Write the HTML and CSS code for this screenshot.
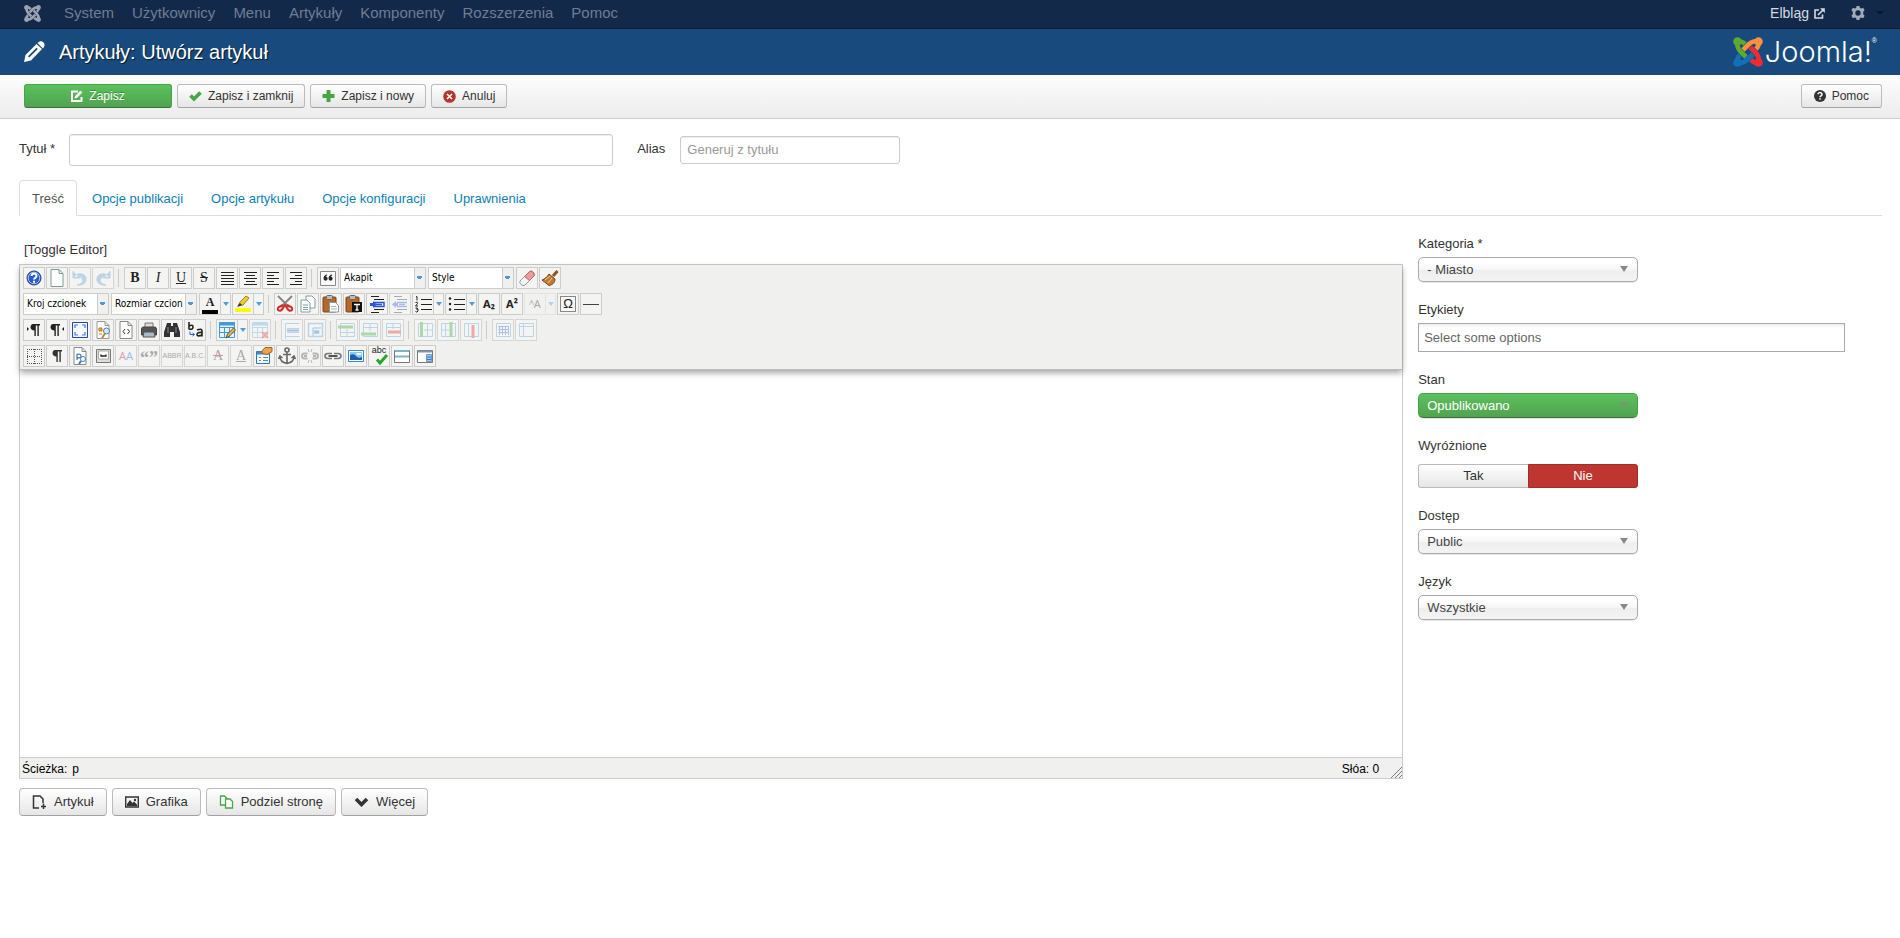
FILE: index.html
```html
<!DOCTYPE html>
<html lang="pl">
<head>
<meta charset="utf-8">
<title>Artykuły: Utwórz artykuł</title>
<link rel="stylesheet" href="styles.css">
</head>
<body>
<svg width="0" height="0" class="defs" aria-hidden="true">
  <defs>
    <g id="arm" fill="none" stroke-width="4.600">
      <circle cx="4.500" cy="4.500" r="2" />
      <path d="M4 5C4 10 5 12 7.500 14.500L13 20M5 4C9 4 10.500 5.500 12 7" />
    </g>
    <path id="page" d="M4 1.500h8l4 4v13H4zM12 1.500v4h4" />
    <g id="pilcrow"><path d="M9 4h7v1.500h-1.200V16h-1.400V5.500h-1.600V16h-1.400v-5.500C8 10.500 6.500 9 6.500 7.200S7.500 4 9 4z" /></g>
    <g id="cells" fill="none"><path d="M2.500 2.500h15v15h-15zM2.500 7.500h15M2.500 12.500h15M7.500 7.500v10M12.500 7.500v10" /><path d="M2.500 4h15" stroke-width="3" /></g>
    <g id="clip"><rect x="2" y="3" width="13" height="15" rx="1" fill="#b8672a" stroke="#7e4317" /><rect x="5.500" y="1.500" width="6" height="4" rx="1" fill="#bbb" stroke="#666" /></g>
  </defs>
</svg>

<nav class="topbar">
  <a class="brand" href="#" aria-label="Joomla">
    <svg width="17" height="17" viewBox="0 0 30 30" stroke="#9aa3b0">
      <use href="#arm" /><use href="#arm" transform="rotate(90 15 15)" /><use href="#arm" transform="rotate(180 15 15)" /><use href="#arm" transform="rotate(270 15 15)" />
    </svg>
  </a>
  <ul class="menu">
    <li><a href="#">System</a></li>
    <li><a href="#">Użytkownicy</a></li>
    <li><a href="#">Menu</a></li>
    <li><a href="#">Artykuły</a></li>
    <li><a href="#">Komponenty</a></li>
    <li><a href="#">Rozszerzenia</a></li>
    <li><a href="#">Pomoc</a></li>
  </ul>
  <a class="site" href="#">Elbląg
    <svg width="11" height="11" viewBox="0 0 11 11" fill="none" stroke="#d6dbe2" stroke-width="1.600"><path d="M5 2H1v8h7.500V6.500M4 7l5-5" /><path d="M6 .2h4.800V5z" fill="#d6dbe2" stroke="none" /></svg>
  </a>
  <button class="gear" type="button" aria-label="Ustawienia">
    <svg width="14" height="14" viewBox="0 0 14 14"><path fill="#a3abb8" fill-rule="evenodd" d="M5.600 0h2.800l.5 1.900 1.400.7 1.800-.8 1.500 2.400-1.400 1.500v2.600l1.400 1.500-1.500 2.400-1.800-.8-1.400.7-.5 1.900H5.600l-.5-1.900-1.400-.7-1.800.8L.400 9.800l1.400-1.500V5.700L.4 4.200l1.500-2.400 1.800.8 1.400-.7zM7 4.300a2.700 2.700 0 1 0 0 5.400 2.700 2.700 0 0 0 0-5.400z" /></svg>
    <span class="caret"></span>
  </button>
</nav>

<header class="header">
  <svg width="22" height="22" viewBox="0 0 22 22"><path fill="#fff" fill-rule="evenodd" d="M1 21l1.500-7L13.500 3l5.500 5L8 19.500zM13.500 6.800L5 15.200l1.200 1.300 8.600-8.400zM14.500 2C17-.5 19 0 20.500 1.500S22 5 20 7.500z" /></svg>
  <h1>Artykuły: Utwórz artykuł</h1>
  <div class="logo">
    <svg width="30" height="30" viewBox="0 0 30 30">
      <use href="#arm" stroke="#5cab2e" /><use href="#arm" transform="rotate(90 15 15)" stroke="#f9913d" /><use href="#arm" transform="rotate(180 15 15)" stroke="#ee2c32" /><use href="#arm" transform="rotate(270 15 15)" stroke="#1170b8" />
    </svg>
    <span>Joomla!</span><sup>®</sup>
  </div>
</header>

<div class="subhead">
  <button class="btn btn-success" type="button">
    <svg width="12" height="12" viewBox="0 0 12 12" fill="none" stroke="#fff" stroke-width="2"><path d="M7 1.500H1v9.500h9.500V7" /><path d="M3.500 8.500l.6-2.500L9.500.6l1.900 1.900L6 8z" fill="#fff" stroke="none" /></svg>
    Zapisz</button>
  <button class="btn" type="button">
    <svg width="13" height="12" viewBox="0 0 13 12"><path d="M1.500 5.500l3.500 3.500L11.500 2.500" fill="none" stroke="#46a546" stroke-width="3.600" /></svg>
    Zapisz i zamknij</button>
  <button class="btn" type="button">
    <svg width="13" height="12" viewBox="0 0 13 12"><path d="M6.500 0v12M.5 6h12" stroke="#46a546" stroke-width="4" /></svg>
    Zapisz i nowy</button>
  <button class="btn" type="button">
    <svg width="13" height="13" viewBox="0 0 13 13"><circle cx="6.500" cy="6.500" r="6.300" fill="#b5352e" /><path d="M4 4l5 5M9 4L4 9" stroke="#fff" stroke-width="1.600" /></svg>
    Anuluj</button>
  <button class="btn help" type="button">
    <svg width="12" height="12" viewBox="0 0 12 12"><circle cx="6" cy="6" r="6" fill="#333" /><path d="M4 4.300C4 2 8.200 2 8 4.500 8 5.800 6 5.800 6 7.200M6 8.200v1.600" fill="none" stroke="#fff" stroke-width="1.500" /></svg>
    Pomoc</button>
</div>

<main>
  <div class="title-row">
    <label for="title">Tytuł *</label>
    <input class="title-input" id="title" type="text">
    <label class="alias-label" for="alias">Alias</label>
    <input class="alias-input" id="alias" type="text" placeholder="Generuj z tytułu">
  </div>

  <ul class="tabs">
    <li><a class="active" href="#">Treść</a></li>
    <li><a href="#">Opcje publikacji</a></li>
    <li><a href="#">Opcje artykułu</a></li>
    <li><a href="#">Opcje konfiguracji</a></li>
    <li><a href="#">Uprawnienia</a></li>
  </ul>

  <div class="columns">
    <section class="content">
      <a class="toggle" href="#">[Toggle Editor]</a>
      <div class="editor">
        <div class="tools">
          <div class="row">
            <button class="t" type="button" aria-label="Pomoc edytora"><svg viewBox="0 0 20 20"><circle cx="10" cy="10" r="7" fill="#2a5bc8" stroke="#1d3f96" /><circle cx="10" cy="10" r="5.800" fill="none" stroke="#a9c2f2" /><path d="M7.500 8C7.500 5 12.500 5 12.500 8c0 1.800-2.500 1.800-2.500 3.500M10 12.800v2" fill="none" stroke="#fff" stroke-width="2" /></svg></button>
            <button class="t" type="button" aria-label="Nowy dokument"><svg viewBox="0 0 20 20"><use href="#page" fill="#fff" stroke="#7c9a92" /></svg></button>
            <button class="t off" type="button" aria-label="Cofnij"><svg viewBox="0 0 20 20"><path d="M3 3v7h7M4 9c3-5 11-4 12 1s-4 8-9 7c5-1 7-4 5-6.500S7 8 6 10z" fill="#5b9bd0" stroke="#5b9bd0" /></svg></button>
            <button class="t off" type="button" aria-label="Ponów"><svg viewBox="0 0 20 20"><path d="M17 3v7h-7M16 9C13 4 5 5 4 10s4 8 9 7c-5-1-7-4-5-6.500S13 8 14 10z" fill="#5b9bd0" stroke="#5b9bd0" /></svg></button>
            <i class="sep"></i>
            <button class="t glyph" type="button"><b>B</b></button>
            <button class="t glyph" type="button"><em>I</em></button>
            <button class="t glyph" type="button"><u>U</u></button>
            <button class="t glyph" type="button"><s>S</s></button>
            <button class="t" type="button" aria-label="Wyjustuj"><svg viewBox="0 0 20 20" stroke="#222"><path d="M4 4.500h13M4 7.500h13M4 10.500h13M4 13.500h13M4 16.500h13" /></svg></button>
            <button class="t" type="button" aria-label="Wyśrodkuj"><svg viewBox="0 0 20 20" stroke="#222"><path d="M4 4.500h13M6 7.500h9M4 10.500h13M6 13.500h9M4 16.500h13" /></svg></button>
            <button class="t" type="button" aria-label="Do lewej"><svg viewBox="0 0 20 20" stroke="#222"><path d="M4 4.500h12M4 7.500h7M4 10.500h12M4 13.500h7M4 16.500h12" /></svg></button>
            <button class="t" type="button" aria-label="Do prawej"><svg viewBox="0 0 20 20" stroke="#222"><path d="M4 4.500h12M9 7.500h7M4 10.500h12M9 13.500h7M4 16.500h12" /></svg></button>
            <i class="sep"></i>
            <button class="t" type="button" aria-label="Cytat blokowy"><svg viewBox="0 0 20 20"><path d="M2.500 3.500h15v14h-15z" fill="#fafafa" stroke="#888" /><path d="M9 7c-2 0-3 1.500-3 3.500A1.600 1.600 0 1 0 7.500 9M14 7c-2 0-3 1.500-3 3.500A1.600 1.600 0 1 0 12.500 9" fill="#222" stroke="#222" /></svg></button>
            <div class="pick"><select aria-label="Format"><option>Akapit</option></select></div>
            <div class="pick"><select aria-label="Style"><option>Style</option></select></div>
            <button class="t" type="button" aria-label="Usuń formatowanie"><svg viewBox="0 0 20 20"><path d="M3 13l9-9q2-2 4 0t1 4l-9 9q-2 1.500-4-.5T3 13z" fill="#f5f5f5" stroke="#999" /><path d="M7.500 8.500L12 4q2-2 4 0t1 4l-4.500 4.500z" fill="#eb9c9c" stroke="#b96a6a" /></svg></button>
            <button class="t" type="button" aria-label="Wyczyść kod"><svg viewBox="0 0 20 20"><path d="M17.500 3L13 8" stroke="#8a5423" stroke-width="3" /><path d="M9 6l6 5c0 4-3 6-6 6.500L2 12c3-1 5-3 7-6z" fill="#c17a35" stroke="#744317" /><path d="M5 12l5-4M8 15l4-5" stroke="#f0c890" /></svg></button>
          </div>
          <div class="row">
            <div class="pick"><select aria-label="Kroj czcionek"><option>Kroj czcionek</option></select></div>
            <div class="pick"><select aria-label="Rozmiar czcionek"><option>Rozmiar czcion</option></select></div>
            <div class="split"><button class="t color-a" type="button">A</button><button class="dd" type="button" aria-label="Kolor tekstu"></button></div>
            <div class="split"><button class="t" type="button" aria-label="Podświetl"><svg viewBox="0 0 20 20"><path d="M2 14h16v4H2z" fill="#ff0" /><path d="M5 12l2-4 6-6 3 2-6 7z" fill="#f0d028" stroke="#9b8420" /><path d="M4 13l3-4 2 2z" fill="#333" /></svg></button><button class="dd" type="button" aria-label="Kolor tła"></button></div>
            <i class="sep"></i>
            <button class="t" type="button" aria-label="Wytnij"><svg viewBox="0 0 20 20" fill="none"><path d="M3 2l11 11M17 2L6 13" stroke="#888" stroke-width="2" /><path d="M8 11l-3 1.500q-3 1-2 3.500 3 2 5-2l2-3 2 3q2 4 5 2 1-2.500-2-3.500L12 11" stroke="#cf2b2b" stroke-width="2" /></svg></button>
            <button class="t" type="button" aria-label="Kopiuj"><svg viewBox="0 0 20 20" fill="#fff" stroke="#7f9ea5"><path d="M8 2h6l3 3v9H8z" /><path d="M3 6h6l3 3v9H3zM5 11h5M5 13.500h5M5 15.500h5" /></svg></button>
            <button class="t" type="button" aria-label="Wklej"><svg viewBox="0 0 20 20"><use href="#clip" /><path d="M8.500 8.500h6l3 3v6.500h-9z" fill="#fff" stroke="#7f9ea5" /><path d="M10 12.500h5M10 15h6" stroke="#9bb" /></svg></button>
            <button class="t" type="button" aria-label="Wklej jako tekst"><svg viewBox="0 0 20 20"><use href="#clip" /><path d="M8 8h10v10H8z" fill="#111" /><path d="M10 10.500h6M13 10.500V16M11.500 16h3" stroke="#fff" stroke-width="1.300" /></svg></button>
            <button class="t" type="button" aria-label="Zwiększ wcięcie"><svg viewBox="0 0 20 20"><path d="M4 2.500h8M7 5.500h10M7 15.500h10M4 18.500h8" stroke="#222" /><path d="M7 8.500h10v4H7M9 10.500h6" fill="none" stroke="#2a57d8" stroke-width="1.500" /><path d="M3 9h3V7l4 3.500L6 14v-2H3z" fill="#2a57d8" /></svg></button>
            <button class="t off" type="button" aria-label="Zmniejsz wcięcie"><svg viewBox="0 0 20 20"><path d="M4 2.500h8M7 5.500h10M7 15.500h10M4 18.500h8" stroke="#222" /><path d="M7 8.500h10M7 12.500h10M9 10.500h6" stroke="#2a57d8" stroke-width="1.500" /><path d="M8 9v3H6v2l-4-3.500L6 7v2z" fill="#2a57d8" /></svg></button>
            <div class="split"><button class="t" type="button" aria-label="Numerowanie"><svg viewBox="0 0 20 20" fill="none" stroke="#222"><path d="M8 5.500h11M8 10.500h11M8 15.500h11M3 3l1-.5v4M2.500 8.500q2.500-1 2 1l-2 2.500H5M2.500 14q2.500-.5 2 1h-1q2.500 0 1.500 2t-2.500.5" /></svg></button><button class="dd" type="button" aria-label="Rodzaj numeracji"></button></div>
            <div class="split"><button class="t" type="button" aria-label="Wypunktowanie"><svg viewBox="0 0 20 20" fill="none" stroke="#222"><path d="M8 5.500h11M8 10.500h11M8 15.500h11" /><circle cx="4" cy="4.500" r="1.200" fill="#222" stroke="none" /><circle cx="4" cy="10" r="1.200" fill="#222" stroke="none" /><circle cx="4" cy="15.500" r="1.200" fill="#222" stroke="none" /></svg></button><button class="dd" type="button" aria-label="Rodzaj punktora"></button></div>
            <button class="t tiny" type="button"><b>A₂</b></button>
            <button class="t tiny" type="button"><b>A²</b></button>
            <div class="split off"><button class="t tiny" type="button">ᴬA</button><button class="dd" type="button" aria-label="Wielkość liter"></button></div>
            <button class="t omega" type="button"><span>Ω</span></button>
            <button class="t" type="button" aria-label="Linia pozioma"><svg viewBox="0 0 20 20"><path d="M2 10.500h16" stroke="#444" /></svg></button>
          </div>
          <div class="row">
            <button class="t" type="button" aria-label="Od lewej do prawej"><svg viewBox="0 0 20 20"><use href="#pilcrow" fill="#222" /><path d="M3 7v4l2-2z" fill="#222" /></svg></button>
            <button class="t" type="button" aria-label="Od prawej do lewej"><svg viewBox="0 0 20 20"><use href="#pilcrow" x="-3" fill="#222" /><path d="M17 7v4l-2-2z" fill="#222" /></svg></button>
            <button class="t" type="button" aria-label="Pełny ekran"><svg viewBox="0 0 20 20"><path d="M2.500 2.500h15v15h-15z" fill="#f4f8ff" stroke="#2449b8" /><path d="M5 8V5h3M12 5h3v3M5 12v3h3M12 15h3v-3" fill="none" stroke="#4a78e0" stroke-width="1.200" /></svg></button>
            <button class="t" type="button" aria-label="Podgląd"><svg viewBox="0 0 20 20"><use href="#page" fill="#fff" stroke="#999" /><path d="M6 8h3v3H6zM6 14h3" fill="#e8a53a" stroke="#c07f20" /><circle cx="13.500" cy="11" r="3" fill="#d5e9fa" stroke="#557fa8" /><path d="M12 13.500L9 18" stroke="#b88a30" stroke-width="2" /></svg></button>
            <button class="t" type="button" aria-label="Kod HTML"><svg viewBox="0 0 20 20"><use href="#page" fill="#fff" stroke="#888" /><path d="M9 9l-2 2.500L9 14M11.500 9l2 2.500-2 2.500" fill="none" stroke="#333" /></svg></button>
            <button class="t" type="button" aria-label="Drukuj"><svg viewBox="0 0 20 20"><path d="M6 3h8v5H6z" fill="#ddd" stroke="#777" /><path d="M2.500 9q0-2 2-2h11q2 0 2 2v6h-15z" fill="#555" stroke="#444" /><path d="M5 12h10l1 5H4z" fill="#abc" stroke="#555" /></svg></button>
            <button class="t" type="button" aria-label="Znajdź"><svg viewBox="0 0 20 20"><path d="M5 3h4v3h2V3h4l3 9v5h-6v-5H8v5H2v-5z" fill="#333" /><path d="M6 7v6M14 7v6" stroke="#888" /></svg></button>
            <button class="t" type="button" aria-label="Zamień"><svg viewBox="0 0 20 20" fill="none" stroke="#222" stroke-width="1.600"><path d="M4 2v7.500M4 6q4-2 4 1t-4 2M12 10q5-2 5 1v5.500M17 12.500q-5-.5-5 2t5 .5" /><path d="M5 11.500v3h4M7.500 13l2 1.500-2 1.500" stroke="#2a57d8" stroke-width="1" /></svg></button>
            <i class="sep"></i>
            <div class="split"><button class="t" type="button" aria-label="Tabela"><svg viewBox="0 0 20 20"><path d="M2.500 2.500h15v15h-15z" fill="#e8f4fc" /><use href="#cells" stroke="#459ad5" /><path d="M9 18l1.500-4 6-6 2 2-6 6z" fill="#d9b765" stroke="#6b542a" /></svg></button><button class="dd" type="button" aria-label="Menu tabeli"></button></div>
            <button class="t off" type="button" aria-label="Usuń tabelę"><svg viewBox="0 0 20 20"><use href="#cells" stroke="#5aa9dd" /><path d="M12 12l6 6M18 12l-6 6" stroke="#e02020" stroke-width="2" /></svg></button>
            <i class="sep"></i>
            <button class="t off" type="button" aria-label="Właściwości wiersza"><svg viewBox="0 0 20 20" fill="none" stroke="#4c9cdc"><path d="M17.500 3.500h-14v13h14M3.500 6v13M5 8.500h12M5 12.500h12" /><path d="M5 10.500h12" stroke="#235fc0" stroke-width="2" /></svg></button>
            <button class="t off" type="button" aria-label="Właściwości komórki"><svg viewBox="0 0 20 20" fill="none" stroke="#4c9cdc"><path d="M3.500 3.500h14v13h-14zM8 8h8M8 8v8" stroke-width="1.500" /><path d="M9 10.500h5v3H9z" fill="#235fc0" /></svg></button>
            <i class="sep"></i>
            <button class="t off" type="button" aria-label="Wiersz przed"><svg viewBox="0 0 20 20" fill="none"><path d="M3.500 3.500h14v13h-14zM3.500 12.500h14M10 9v8" stroke="#4c9cdc" /><path d="M1 7h15" stroke="#24a524" stroke-width="3" /></svg></button>
            <button class="t off" type="button" aria-label="Wiersz po"><svg viewBox="0 0 20 20" fill="none"><path d="M3.500 3.500h14v13h-14zM3.500 7.500h14M10 4v7" stroke="#4c9cdc" /><path d="M1 14h15" stroke="#24a524" stroke-width="3" /></svg></button>
            <button class="t off" type="button" aria-label="Usuń wiersz"><svg viewBox="0 0 20 20" fill="none"><path d="M3.500 3.500h14v13h-14zM3.500 7.500h14M10 4v5" stroke="#4c9cdc" /><path d="M5 12h13" stroke="#e02020" stroke-width="3" /></svg></button>
            <i class="sep"></i>
            <button class="t off" type="button" aria-label="Kolumna przed"><svg viewBox="0 0 20 20" fill="none"><path d="M3.500 3.500h14v13h-14zM12.500 4v13M9 10h8" stroke="#4c9cdc" /><path d="M6.500 2v15" stroke="#24a524" stroke-width="3" /></svg></button>
            <button class="t off" type="button" aria-label="Kolumna po"><svg viewBox="0 0 20 20" fill="none"><path d="M3.500 3.500h14v13h-14zM7.500 4v13M4 10h7" stroke="#4c9cdc" /><path d="M13 2v15" stroke="#24a524" stroke-width="3" /></svg></button>
            <button class="t off" type="button" aria-label="Usuń kolumnę"><svg viewBox="0 0 20 20" fill="none"><path d="M3.500 3.500h14v13h-14zM7.500 4v13" stroke="#4c9cdc" /><path d="M12 5v13" stroke="#e02020" stroke-width="3" /></svg></button>
            <i class="sep"></i>
            <button class="t off" type="button" aria-label="Podziel komórki"><svg viewBox="0 0 20 20" fill="none"><path d="M3.500 3.500h14v13h-14z" stroke="#4c9cdc" /><path d="M5.500 6.500h10M5.500 9.500h10M5.500 12.500h10M6.500 6v9M9.500 6v9M12.500 6v9M15.500 6v9" stroke="#235fc0" /></svg></button>
            <button class="t off" type="button" aria-label="Scal komórki"><svg viewBox="0 0 20 20" fill="none"><path d="M3.500 3.500h14v13h-14zM3.500 6.500h14M7.500 4v13" stroke="#4c9cdc" /></svg></button>
          </div>
          <div class="row">
            <button class="t" type="button" aria-label="Linie pomocnicze"><svg viewBox="0 0 20 20" fill="none" stroke="#555" stroke-dasharray="1 1"><path d="M3 3.500h14M3 10.500h14M3 17.500h14M3.500 3v15M10.500 3v15M17.500 3v15" /></svg></button>
            <button class="t" type="button" aria-label="Znaki sterujące"><svg viewBox="0 0 20 20"><use href="#pilcrow" x="-1" fill="#333" /></svg></button>
            <button class="t" type="button" aria-label="Szablon"><svg viewBox="0 0 20 20" fill="none"><use href="#page" fill="#fff" stroke="#888" /><path d="M7 8v6M7 8.500q4-1 4 1.500t-4 1.500" stroke="#4a7fb5" stroke-width="1.300" /><circle cx="13" cy="13" r="2.500" stroke="#4a7fb5" /><path d="M11 15l-2 3" stroke="#4a7fb5" stroke-width="2" /></svg></button>
            <button class="t" type="button" aria-label="Twarda spacja"><svg viewBox="0 0 20 20" fill="none"><path d="M3.500 3.500h14v13h-14z" fill="#ddd" stroke="#777" /><path d="M5.500 5h10v8h-10z" fill="#fff" stroke="#aaa" /><path d="M8 8.500V10h5V8.500" stroke="#222" stroke-width="1.300" /></svg></button>
            <button class="t tiny style off" type="button"><span>A</span>A</button>
            <button class="t quote off" type="button">“”</button>
            <button class="t micro off" type="button">ABBR</button>
            <button class="t micro off" type="button">A.B.C.</button>
            <button class="t glyph del off" type="button"><s>A</s></button>
            <button class="t glyph off" type="button"><u>A</u></button>
            <button class="t" type="button" aria-label="Atrybuty"><svg viewBox="0 0 20 20"><path d="M2.500 5.500h13v12h-13z" fill="#fff" stroke="#2d76bd" /><path d="M3 7h12" stroke="#3a8bd5" stroke-width="3" /><path d="M5 11.500h2M9 11.500h5M5 14.500h2M9 14.500h5" stroke="#4a8ccc" /><path d="M8 5l3-3.500h7v4l-3 2-2 1-5-1z" fill="#e9a457" stroke="#a35e1c" /></svg></button>
            <button class="t" type="button" aria-label="Kotwica"><svg viewBox="0 0 20 20" fill="none" stroke="#666" stroke-width="1.600"><circle cx="10" cy="4" r="2" /><path d="M10 6v12M6 8.500h8M3 10.500q0 5.500 7 7 7-1.500 7-7M1.500 13L3 10l2.500 2M18.500 13L17 10l-2.500 2" /></svg></button>
            <button class="t off" type="button" aria-label="Usuń odnośnik"><svg viewBox="0 0 20 20" fill="none" stroke="#444"><path d="M7.500 7.500h-3q-2.500 0-2.500 2.500t2.500 2.500h3M12.500 7.500h3q2.500 0 2.500 2.500t-2.500 2.500h-3M4 10h3M13 10h3" stroke-width="2" /><path d="M8 3l1 3M12 3l-1 3M8 17l1-3M12 17l-1-3" /></svg></button>
            <button class="t" type="button" aria-label="Odnośnik"><svg viewBox="0 0 20 20" fill="none"><path d="M9 7.500H5q-3 0-3 2.500t3 2.500h4M11 7.500h4q3 0 3 2.500t-3 2.500h-4" stroke="#777" stroke-width="1.600" /><path d="M5.500 10h9" stroke="#555" stroke-width="2" /></svg></button>
            <button class="t" type="button" aria-label="Grafika"><svg viewBox="0 0 20 20"><path d="M2.500 4.500h15v11h-15z" fill="#fff" stroke="#3c8acb" /><path d="M4 6h12v8H4z" fill="#8ec7ef" /><path d="M4 9q4-2 6 1t6 1v3H4z" fill="#1d5fa8" /><path d="M10 7h5v2h-4z" fill="#fff" /></svg></button>
            <button class="t spell" type="button"><span>abc</span><svg viewBox="0 0 20 20"><path d="M8 13.500l3 3.500 7-8" fill="none" stroke="#2aa52a" stroke-width="3" /></svg></button>
            <button class="t" type="button" aria-label="Warstwa"><svg viewBox="0 0 20 20"><path d="M2.500 4.500h15v12h-15z" fill="#fff" stroke="#777" /><path d="M3 5h14M3 10.500h14" stroke="#7fb2c4" stroke-width="2" /></svg></button>
            <button class="t" type="button" aria-label="Obiekt"><svg viewBox="0 0 20 20"><path d="M2.500 4.500h15v12h-15z" fill="#fff" stroke="#777" /><path d="M3 5.500h14" stroke="#7b98ae" stroke-width="2" /><path d="M11.500 8.500h5v7h-5z" fill="#9cc5ec" stroke="#6a9ccf" /><path d="M12 11h4M12 13.500h4" stroke="#3a76b5" /></svg></button>
          </div>
        </div>
        <textarea class="canvas" aria-label="Treść artykułu"></textarea>
        <div class="status">
          <span>Ścieżka:</span><span>p</span>
          <span class="words">Słóa: 0</span>
          <svg width="11" height="11" viewBox="0 0 11 11" stroke="#777"><path d="M0 11L11 0M4 11l7-7M8 11l3-3" /></svg>
        </div>
      </div>
      <div class="below">
        <button class="btn large" type="button"><svg width="15" height="14" viewBox="0 0 15 14" fill="none" stroke="#333" stroke-width="1.500"><path d="M7 13H1.500V1H8l3 3v4M11.500 8.500v5.500M9 11.500h5" /></svg>Artykuł</button>
        <button class="btn large" type="button"><svg width="14" height="12" viewBox="0 0 14 12"><path d="M.7 1h12.600v10H.7z" fill="none" stroke="#333" stroke-width="1.400" /><path d="M2 10V8l3-4 2.500 3L9 5.500l3 3V10z" fill="#333" /><circle cx="10" cy="4" r="1.200" fill="#333" /></svg>Grafika</button>
        <button class="btn large" type="button"><svg width="15" height="14" viewBox="0 0 14 14" fill="#fff" stroke="#46a546" stroke-width="1.300"><path d="M1 1h4l3 3v6H1z" /><path d="M6 4h4.500L13 6.500V13H6z" /></svg>Podziel stronę</button>
        <button class="btn large" type="button"><svg width="15" height="10" viewBox="0 0 14 10"><path d="M1.500 2L7 7.500 12.500 2" fill="none" stroke="#333" stroke-width="3.600" /></svg>Więcej</button>
      </div>
    </section>

    <aside class="side">
      <div class="field"><label for="cat">Kategoria *</label><div class="chosen"><select id="cat"><option>- Miasto</option></select></div></div>
      <div class="field"><label for="tags">Etykiety</label><input class="tags" id="tags" type="text" placeholder="Select some options"></div>
      <div class="field"><label for="state">Stan</label><div class="chosen green"><select id="state"><option>Opublikowano</option></select></div></div>
      <div class="field radios"><span id="feat">Wyróżnione</span><div class="toggle-group" role="group" aria-labelledby="feat"><button type="button">Tak</button><button class="no" type="button">Nie</button></div></div>
      <div class="field"><label for="access">Dostęp</label><div class="chosen"><select id="access"><option>Public</option></select></div></div>
      <div class="field"><label for="lang">Język</label><div class="chosen"><select id="lang"><option>Wszystkie</option></select></div></div>
    </aside>
  </div>
</main>
</body>
</html>
```

FILE: styles.css
```css
* { box-sizing: border-box; }
body { margin: 0; background: #fff; color: #333; font: 13px/18px "Liberation Sans", Arial, sans-serif; }
button, input, select, textarea { font: inherit; color: inherit; margin: 0; }
a { text-decoration: none; color: inherit; }
ul { list-style: none; margin: 0; padding: 0; }
svg { display: block; flex: none; }
.defs { position: absolute; }

.topbar { display: flex; align-items: center; height: 29px; padding: 0 16px 2px 24px; background: #13294a; border-bottom: 1px solid #0d1f3a; font-size: 15px; color: #6f7d92; }
.menu { display: flex; gap: 18px; margin-left: 23px; }
.site { display: flex; align-items: center; gap: 5px; margin-left: auto; color: #d6dbe2; font-size: 14px; }
.gear { display: flex; align-items: center; gap: 11px; margin-left: 26px; padding: 0; border: 0; background: none; }
.caret { border: 4px solid transparent; border-top-color: #0b1930; border-bottom: 0; }

.header { display: flex; align-items: center; height: 46px; padding: 0 23px; background: #184a7d; color: #fff; }
.header h1 { margin: 0 0 0 14px; font-size: 20px; line-height: 24px; font-weight: normal; text-shadow: 1px 1px 1px #06182c; }
.logo { display: flex; align-items: center; margin-left: auto; }
.logo span { margin-left: 2px; font: 300 29px/34px Inter, sans-serif; }
.logo sup { align-self: flex-start; font-size: 7px; line-height: 12px; }

.subhead { display: flex; align-items: flex-start; gap: 5px; height: 44px; padding: 9px 18px 0 24px; background: linear-gradient(#fdfdfd, #ececec); border-bottom: 1px solid #ccc; }
.btn { display: inline-flex; align-items: center; justify-content: center; gap: 6px; height: 24px; padding: 0 11px; border: 1px solid #bbb; border-bottom-color: #a2a2a2; border-radius: 3px; background: linear-gradient(#fff, #e6e6e6); font-size: 12px; line-height: 18px; white-space: nowrap; }
.btn-success { width: 148px; border-color: #46a546 #46a546 #387038; background: linear-gradient(#5bc05b, #51a351); color: #fff; text-shadow: 0 -1px 0 rgba(0, 0, 0, .25); }
.help { margin-left: auto; padding: 0 12px; }
.large { height: 28px; padding: 0 12px; gap: 7px; border-radius: 4px; font-size: 13px; }

main { padding: 14px 18px 0 19px; }
.title-row { display: flex; align-items: center; height: 33px; }
.title-row label { padding-bottom: 2px; }
.title-row input { border: 1px solid #ccc; border-radius: 3px; background: #fff; box-shadow: inset 0 1px 1px rgba(0, 0, 0, .075); padding: 0 6px; }
.title-input { width: 544px; height: 32px; margin-left: 14px; }
.alias-label { margin-left: 24px; }
.title-row .alias-input { width: 220px; height: 28px; margin-left: 15px; }
::placeholder { color: #999; opacity: 1; }

.tabs { display: flex; gap: 2px; margin-top: 14px; border-bottom: 1px solid #ddd; }
.tabs a { display: block; height: 36px; margin-bottom: -1px; padding: 9px 12px; border: 1px solid transparent; border-radius: 4px 4px 0 0; color: #0d7fb8; }
.tabs .active { border-color: #ddd #ddd #fff; background: #fff; color: #555; }

.columns { display: grid; grid-template-columns: 74.3% minmax(0, 1fr); gap: 15px; }
.content { padding-top: 25px; }
.side { padding: 19px 37px 0 0; }
.toggle { display: block; margin: 0 0 5px 5px; }
.editor { border: 1px solid #ccc; }
.tools { position: relative; display: grid; gap: 4px; padding: 2px 3px; background: #f0f0ee; border-bottom: 1px solid #bbb; box-shadow: 0 3px 6px rgba(0, 0, 0, .35); }
.row { display: flex; gap: 1px; height: 22px; }
.sep { width: 2px; margin: 2px 3px; border-left: 1px solid #ccc; }
.t { display: grid; place-items: center; width: 22px; height: 22px; padding: 0; border: 1px solid #ccc; background: #f4f4f3; color: #222; line-height: 18px; }
.t > * { grid-area: 1 / 1; }
.t svg { width: 20px; height: 20px; }
.t.off svg, .split.off { opacity: .35; }
.t.off { color: #aaa; border-color: #d5d5d3; }
.glyph { font: 14px/18px "Liberation Serif", serif; }
.tiny { font: 11px/18px "Noto Sans", sans-serif; }
.tiny.style { display: flex; align-items: center; justify-content: center; }
.tiny.style span { color: #d9a0b0; }
.t.tiny.style { color: #9fc0e4; }
.micro { font: 7px/18px "Liberation Sans", Arial, sans-serif; }
.quote { align-content: start; font: bold 18px/24px "Liberation Serif", serif; }
.del s { text-decoration-color: #e09090; }
.omega span { width: 16px; height: 16px; border: 1px solid #888; background: #fafafa; font-size: 13px; line-height: 14px; }
.spell span { align-self: start; font: 9px/9px "Liberation Sans", Arial, sans-serif; }
.color-a { align-content: start; background: linear-gradient(#000, #000) 2px 16px / 16px 4px no-repeat, #f4f4f3; font: bold 12px/16px "Liberation Serif", serif; }
.split { display: flex; }
.dd { display: grid; place-items: center; width: 10px; height: 22px; padding: 0; border: 1px solid #ccc; border-left: 0; background: #f4f4f3; }
.dd::after { content: ""; border: 3px solid transparent; border-top: 4px solid #559bd5; border-bottom: 0; }
.pick { display: flex; width: 86px; margin-right: 1px; border: 1px solid #ccc; background: #fff; }
.pick select { flex: 1; min-width: 0; padding: 0 0 0 3px; border: 0; background: none; appearance: none; color: #000; font: 10px/18px "DejaVu Sans Condensed", "Noto Sans", sans-serif; }
.pick::after { content: ""; flex: none; width: 10px; background: linear-gradient(#4f98d4, #4f98d4) 2px 8px / 5px 2px no-repeat, linear-gradient(#4f98d4, #4f98d4) 3px 10px / 3px 1px no-repeat, #f0f0ee; border-left: 1px solid #ccc; pointer-events: none; }
.canvas { display: block; width: 100%; height: 387px; border: 0; outline: 0; resize: none; }
.status { display: flex; align-items: center; gap: 5px; height: 21px; padding: 1px 0 0 2px; border-top: 1px solid #ccc; background: #f0f0ee; color: #000; font-size: 12px; }
.words { margin-left: auto; }
.status svg { align-self: flex-end; margin-left: 7px; }
.below { display: flex; gap: 5px; margin-top: 9px; }

.field { margin-bottom: 19px; }
.field label, .field > span { display: block; margin-bottom: 4px; }
.chosen { position: relative; width: 220px; }
.chosen select { display: block; width: 100%; height: 25px; padding: 0 8px; border: 1px solid #aaa; border-radius: 5px; appearance: none; background: linear-gradient(#fff 20%, #f6f6f6 50%, #eee 52%, #f4f4f4); color: #444; box-shadow: 0 1px 1px rgba(0, 0, 0, .1); }
.chosen::after { content: ""; position: absolute; right: 10px; top: 9px; border: 4px solid transparent; border-top: 6px solid #888; border-bottom: 0; pointer-events: none; }
.chosen.green select { border-color: #46a546 #46a546 #387038; background: linear-gradient(#5bc05b, #51a351); color: #fff; }
.chosen.green::after { opacity: .6; }
.tags { display: block; width: 100%; height: 29px; padding: 0 5px; border: 1px solid #aaa; background: linear-gradient(#eee 1%, #fff 15%); }
.tags::placeholder { color: #666; }
.field.radios > span { margin-bottom: 9px; }
.toggle-group { display: flex; width: 220px; }
.toggle-group button { flex: 1; height: 24px; padding: 0; border: 1px solid #bbb; border-right: 0; border-radius: 3px 0 0 3px; background: linear-gradient(#fff, #e6e6e6); }
.toggle-group .no { border: 1px solid #a12d27; border-radius: 0 3px 3px 0; background: #bd362f; color: #fff; }
```
